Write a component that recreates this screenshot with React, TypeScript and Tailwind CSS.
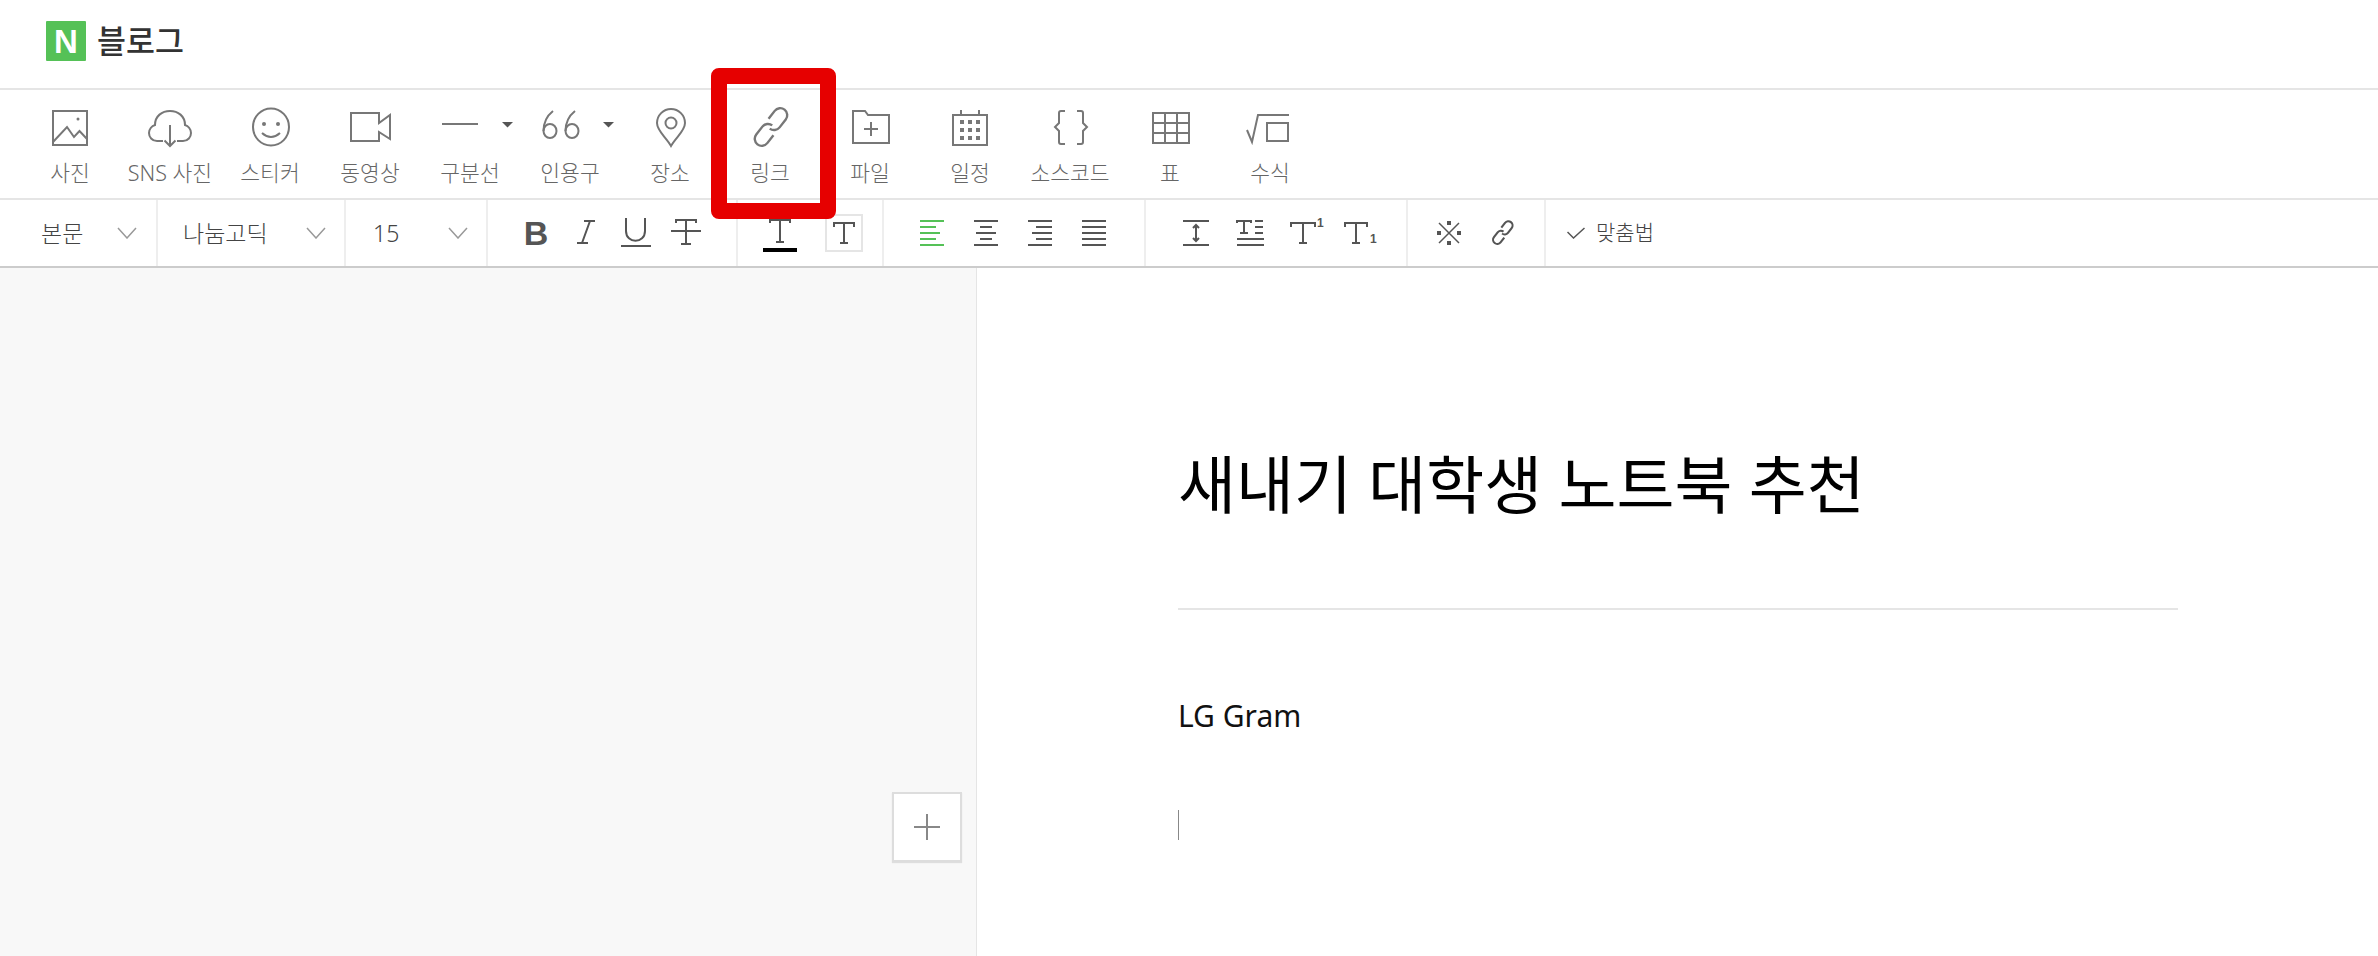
import type { ReactNode } from "react";

const FONT = "font-['Noto_Sans','Noto_Sans_CJK_KR',sans-serif]";

// top row icons, drawn in a 100x44 box centred on the item
const INSERT_ITEMS: { label: string; icon: ReactNode }[] = [
  {
    label: "사진",
    icon: (
      <>
        <rect x="33" y="5" width="34" height="34" />
        <path d="M33 36 L47 21 L54 31 L59.500 25 L67 33" />
        <circle cx="58" cy="13" r="1.500" fill="#777" stroke="none" />
      </>
    ),
  },
  {
    label: "SNS 사진",
    icon: (
      <>
        <path d="M43 35 H37 C32 35 29 31 29 27 C29 23 32 20 35 19 C35 10 42 5 50 5 C58 5 65 10 65 19 C68 20 71 23 71 27 C71 31 68 35 63 35 H57" />
        <path d="M50 19 V40 M44.500 34.500 L50 40 L55.500 34.500" />
      </>
    ),
  },
  {
    label: "스티커",
    icon: (
      <>
        <ellipse cx="51" cy="21" rx="18" ry="18.500" />
        <circle cx="44" cy="18" r="2" fill="#777" stroke="none" />
        <circle cx="58" cy="18" r="2" fill="#777" stroke="none" />
        <path d="M42 27 Q51 35 60 27" />
      </>
    ),
  },
  {
    label: "동영상",
    icon: <path d="M59 17 V7 H31 V35 H59 V26 L70 33 V9 Z" />,
  },
  {
    label: "구분선",
    icon: (
      <>
        <path d="M22 18 H58" />
        <path d="M82 16 H93 L87.500 21.500 Z" fill="#555" stroke="none" />
      </>
    ),
  },
  {
    label: "인용구",
    icon: (
      <>
        <ellipse cx="30" cy="25" rx="6.500" ry="7" />
        <path d="M23.500 25 C23.500 16 28 9 33 5" />
        <ellipse cx="52" cy="25" rx="6.500" ry="7" />
        <path d="M45.500 25 C45.500 16 50 9 55 5" />
        <path d="M83 16 H94 L88.500 21.500 Z" fill="#555" stroke="none" />
      </>
    ),
  },
  {
    label: "장소",
    icon: (
      <>
        <path d="M51 40 C46 31 37 25 37 17 A14 14 0 0 1 65 17 C65 25 56 31 51 40 Z" />
        <circle cx="51" cy="17" r="5.500" />
      </>
    ),
  },
  {
    label: "링크",
    icon: (
      <g transform="rotate(38 51 21)" strokeWidth="2.400">
        <path d="M44 16 V6 a7 7 0 0 1 14 0 V16 a7 7 0 0 1 -7 7" />
        <path d="M58 26 V36 a7 7 0 0 1 -14 0 V26 a7 7 0 0 1 7 -7" />
      </g>
    ),
  },
  {
    label: "파일",
    icon: (
      <>
        <path d="M33 5 H45 L48 9 H69 V37 H33 Z" />
        <path d="M44 23 H58 M51 16 V30" />
      </>
    ),
  },
  {
    label: "일정",
    icon: (
      <>
        <rect x="33" y="9" width="34" height="30" />
        <path d="M41 4 V9 M59 4 V9" />
        <path
          strokeDasharray="4 4"
          strokeWidth="4"
          d="M40 16 H60 M40 24 H60 M40 32 H60"
        />
      </>
    ),
  },
  {
    label: "소스코드",
    icon: (
      <>
        <path d="M45 5 H41 Q39 5 39 7 V17 L35 21 L39 25 V36 Q39 38 41 38 H45" />
        <path d="M57 5 H61 Q63 5 63 7 V17 L67 21 L63 25 V36 Q63 38 61 38 H57" />
      </>
    ),
  },
  {
    label: "표",
    icon: (
      <>
        <rect x="33" y="7" width="36" height="30" />
        <path d="M45 7 V37 M57 7 V37 M33 17 H69 M33 27 H69" />
      </>
    ),
  },
  {
    label: "수식",
    icon: (
      <>
        <path d="M27 24 L32 36 L38 9 H69" />
        <rect x="47" y="17" width="21" height="18" />
      </>
    ),
  },
];

function FormatIcon({ children }: { children: ReactNode }) {
  return (
    <svg
      width="50"
      height="40"
      viewBox="0 0 50 40"
      fill="none"
      stroke="#555"
      strokeWidth="2"
    >
      {children}
    </svg>
  );
}

function Chevron() {
  return (
    <svg width="20" height="12" viewBox="0 0 20 12" fill="none" stroke="#999" strokeWidth="1.500">
      <path d="M1 1 L10 11 L19 1" />
    </svg>
  );
}

function Separator() {
  return <div className="w-[2px] h-full bg-[#eeeeee]" />;
}

function SelectBox({
  label,
  width,
  textLeft,
  chevronLeft,
}: {
  label: string;
  width: string;
  textLeft: string;
  chevronLeft: string;
}) {
  return (
    <div className={`flex items-center h-full ${width}`}>
      <span className={`text-[23px] text-[#444] font-light ${textLeft}`}>{label}</span>
      <span className={`flex ${chevronLeft}`}>
        <Chevron />
      </span>
    </div>
  );
}

export default function App() {
  return (
    <div className={`relative w-full h-[956px] bg-white overflow-hidden flex flex-col ${FONT}`}>
      {/* Logo bar */}
      <div className="h-[90px] shrink-0 border-b-2 border-[#e5e5e5] pl-[46px] pb-[6px] flex items-center gap-[11px]">
        <div className="w-10 h-10 rounded-[1px] bg-[#55c157] flex items-center justify-center">
          <span className="text-white font-black text-[33px] leading-none font-['Liberation_Sans',sans-serif]">
            N
          </span>
        </div>
        <span className="text-[31.500px] font-medium text-[#333] leading-none">블로그</span>
      </div>

      {/* Insert toolbar */}
      <div className="h-[110px] shrink-0 border-b-2 border-[#e5e5e5] pl-[20px] flex">
        {INSERT_ITEMS.map((item) => (
          <div key={item.label} className="w-[100px] flex flex-col items-center pt-[16px]">
            <svg
              width="100"
              height="44"
              viewBox="0 0 100 44"
              fill="none"
              stroke="#777"
              strokeWidth="2"
            >
              {item.icon}
            </svg>
            <span className="mt-[9px] text-[21.500px] font-light leading-[28px] text-[#666] whitespace-nowrap">
              {item.label}
            </span>
          </div>
        ))}
      </div>

      {/* Format toolbar */}
      <div className="h-[68px] shrink-0 border-b-2 border-[#cccccc] flex items-center">
        <SelectBox label="본문" width="w-[156px]" textLeft="ml-[41px]" chevronLeft="ml-[34px]" />
        <Separator />
        <SelectBox label="나눔고딕" width="w-[186px]" textLeft="ml-[25px]" chevronLeft="ml-[38px]" />
        <Separator />
        <SelectBox label="15" width="w-[140px]" textLeft="ml-[27px]" chevronLeft="ml-[49px]" />
        <Separator />

        <div className="w-[248px] h-full flex items-center pl-[23px]">
          <div className="w-[50px] text-center text-[34px] font-bold leading-none text-[#555] font-['Liberation_Sans',sans-serif]">
            B
          </div>
          <FormatIcon>
            <path d="M23 8 H34 M16 30 H27 M29 8 L21 30" />
          </FormatIcon>
          <FormatIcon>
            <path d="M15 5 V18 C15 31 34 31 34 18 V5 M10 33 H40" />
          </FormatIcon>
          <FormatIcon>
            <path d="M15 10 V7 H35 V10 M25 7 V31 M20 31 H30 M10 18 H40" />
          </FormatIcon>
        </div>
        <Separator />

        <div className="w-[144px] h-full flex items-center pl-[17px]">
          <FormatIcon>
            <path d="M15 10 V7 H35 V10 M25 7 V29 M21 29 H29" />
            <rect x="8" y="35" width="34" height="4" fill="#000" stroke="none" />
          </FormatIcon>
          <div className="ml-[20px] w-[38px] h-[38px] border-2 border-[#e5e5e5] flex items-center justify-center">
            <svg width="24" height="22" viewBox="0 0 24 22" fill="none" stroke="#555" strokeWidth="2">
              <path d="M2 5 V1 H22 V5 M12 1 V21 M8 21 H16" />
            </svg>
          </div>
        </div>
        <Separator />

        <div className="w-[260px] h-full flex items-center pl-[36px]">
          <svg width="24" height="26" viewBox="0 0 24 26" stroke="#55c157" strokeWidth="2">
            <path d="M0 1 H24 M0 7 H16 M0 13 H20 M0 19 H16 M0 25 H24" />
          </svg>
          <svg className="ml-[30px]" width="24" height="26" viewBox="0 0 24 26" stroke="#555" strokeWidth="2">
            <path d="M0 1 H24 M6 7 H18 M2 13 H22 M6 19 H18 M0 25 H24" />
          </svg>
          <svg className="ml-[30px]" width="24" height="26" viewBox="0 0 24 26" stroke="#555" strokeWidth="2">
            <path d="M0 1 H24 M8 7 H24 M4 13 H24 M8 19 H24 M0 25 H24" />
          </svg>
          <svg className="ml-[30px]" width="24" height="26" viewBox="0 0 24 26" stroke="#555" strokeWidth="2">
            <path d="M0 1 H24 M0 7 H24 M0 13 H24 M0 19 H24 M0 25 H24" />
          </svg>
        </div>
        <Separator />

        <div className="w-[260px] h-full flex items-center pl-[23px]">
          <svg width="54" height="30" viewBox="0 0 54 30" fill="none" stroke="#555" strokeWidth="2">
            <path d="M14 3 H40 M14 27 H40 M27 8 V22" />
            <path d="M24 10 L27 7 L30 10 M24 20 L27 23 L30 20" />
          </svg>
          <svg width="54" height="30" viewBox="0 0 54 30" fill="none" stroke="#555" strokeWidth="2">
            <path d="M14 5 V3 H28 V5 M21 3 V15 M17 15 H25 M32 3 H40 M32 9 H40 M32 15 H40 M14 21 H41 M14 27 H41" />
          </svg>
          <svg width="54" height="30" viewBox="0 0 54 30" fill="none" stroke="#555" strokeWidth="2">
            <path d="M14 9 V5 H38 V9 M26 5 V25 M22 25 H30" />
            <text x="40" y="9" fontSize="12" fontWeight="700" fill="#555" stroke="none" fontFamily="Liberation Sans, sans-serif">
              1
            </text>
          </svg>
          <svg width="54" height="30" viewBox="0 0 54 30" fill="none" stroke="#555" strokeWidth="2">
            <path d="M14 9 V5 H36 V9 M25 5 V25 M21 25 H29" />
            <text x="39" y="25" fontSize="12" fontWeight="700" fill="#555" stroke="none" fontFamily="Liberation Sans, sans-serif">
              1
            </text>
          </svg>
        </div>
        <Separator />

        <div className="w-[136px] h-full flex items-center pl-[14px]">
          <svg width="54" height="30" viewBox="0 0 54 30" fill="none" stroke="#555">
            <path strokeWidth="1.500" d="M17 5 L37 25 M37 5 L17 25" />
            <path
              strokeWidth="4"
              d="M27 3 V7 M27 23 V27 M15 15 H19 M35 15 H39"
            />
          </svg>
          <svg width="54" height="30" viewBox="0 0 54 30" fill="none" stroke="#555" strokeWidth="2">
            <g transform="translate(16 2) scale(0.6) rotate(38 18 21)">
              <path d="M11 16 V6 a7 7 0 0 1 14 0 V16 a7 7 0 0 1 -7 7" strokeWidth="3.500" />
              <path d="M25 26 V36 a7 7 0 0 1 -14 0 V26 a7 7 0 0 1 7 -7" strokeWidth="3.500" />
            </g>
          </svg>
        </div>
        <Separator />

        <div className="h-full flex items-center pl-[21px]">
          <svg width="18" height="12" viewBox="0 0 18 12" fill="none" stroke="#555" strokeWidth="1.500">
            <path d="M0.500 5 L6.500 11 L17.500 1" />
          </svg>
          <span className="ml-[11px] text-[21px] text-[#444] font-light">맞춤법</span>
        </div>
      </div>

      {/* Editor area */}
      <div className="flex-1 flex min-h-0">
        <div className="relative w-[977px] shrink-0 bg-[#f8f8f8] border-r border-[#e5e5e5]">
          <button className="absolute left-[892px] top-[524px] w-[70px] h-[70px] bg-white border-2 border-[#dddddd] shadow-[0_1px_1px_rgba(0,0,0,0.1)] flex items-center justify-center">
            <svg width="26" height="26" viewBox="0 0 26 26" stroke="#888" strokeWidth="2">
              <path d="M0 13 H26 M13 0 V26" />
            </svg>
          </button>
        </div>
        <div className="flex-1 pl-[201px] pt-[171px]">
          <div className="w-[1000px]">
            <h1 className="text-[63px] leading-[90px] text-black">새내기 대학생 노트북 추천</h1>
            <div className="mt-[79px] h-[2px] bg-[#e5e5e5]" />
            <p className="mt-[84px] text-[30px] leading-[44px] text-[#111]">LG Gram</p>
            <div className="mt-[72px] w-px h-[30px] bg-[#888]" />
          </div>
        </div>
      </div>

      {/* Red highlight around the link button */}
      <div className="absolute left-[711px] top-[68px] w-[125px] h-[151px] border-[16px] border-[#e60000] rounded-[8px]" />
    </div>
  );
}
